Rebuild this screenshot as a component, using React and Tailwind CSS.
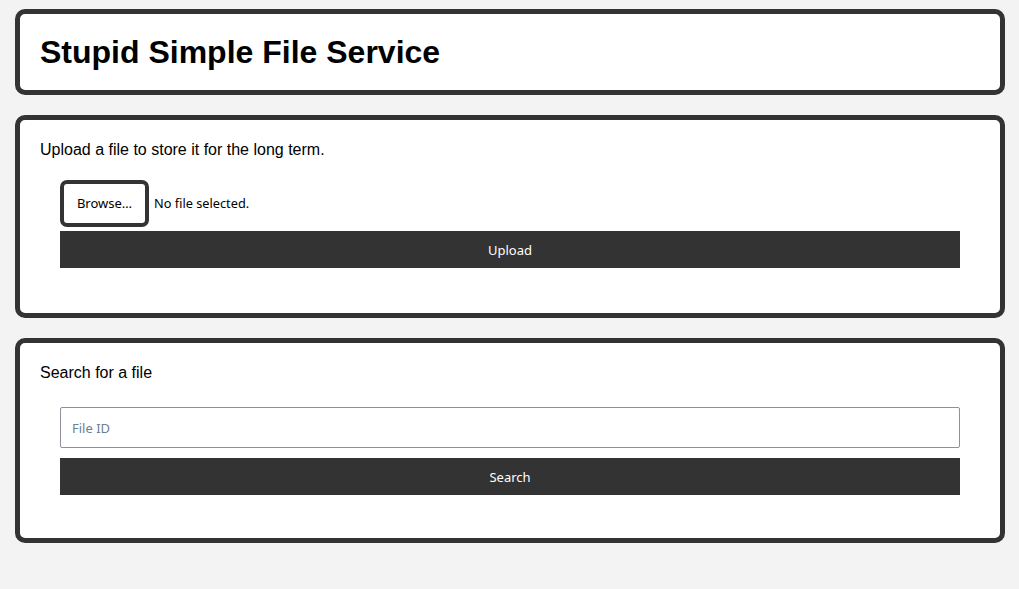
export default function App() {
  return (
    <div className="min-h-screen bg-[#f3f3f3] pt-[9px] pb-[20px] pl-[15px] pr-[14px] font-['Liberation_Sans',Arial,sans-serif] text-black">
      {/* header */}
      <div className="mb-[20px] rounded-[10px] border-[5px] border-[#333333] bg-white px-[20px] pt-[20px] pb-[19px]">
        <h1 className="text-[32px] font-bold leading-[37px]">Stupid Simple File Service</h1>
      </div>

      {/* upload */}
      <div className="mb-[20px] rounded-[10px] border-[5px] border-[#333333] bg-white px-[20px] pt-[20px] pb-[45px]">
        <p className="text-[16px] leading-[20px]">Upload a file to store it for the long term.</p>
        <form className="mx-[20px] mt-[20px] flex flex-col font-['Noto_Sans',sans-serif]">
          <div className="flex items-center">
            <label className="flex h-[47px] w-[89px] items-center justify-center rounded-[7px] border-[4px] border-[#333333] bg-white pt-[1px] text-[13px] text-black">
              Browse…
            </label>
            <span className="ml-[5px] text-[12.75px]">No file selected.</span>
          </div>
          <button
            type="button"
            className="mt-[4px] h-[37px] w-full bg-[#333333] pt-[2px] text-[13px] text-white"
          >
            Upload
          </button>
        </form>
      </div>

      {/* search */}
      <div className="rounded-[10px] border-[5px] border-[#333333] bg-white px-[20px] pt-[20px] pb-[43px]">
        <p className="text-[16px] leading-[20px]">Search for a file</p>
        <form className="mx-[20px] mt-[24px] flex flex-col gap-[10px] font-['Noto_Sans',sans-serif]">
          <input
            type="text"
            placeholder="File ID"
            className="h-[41px] w-full rounded-[2px] border border-[#8f8f9d] bg-white px-[11px] text-[13px] placeholder:text-[#6c7f90] outline-none"
          />
          <button type="button" className="h-[37px] w-full bg-[#333333] pt-[2px] text-[13px] text-white">
            Search
          </button>
        </form>
      </div>
    </div>
  );
}
